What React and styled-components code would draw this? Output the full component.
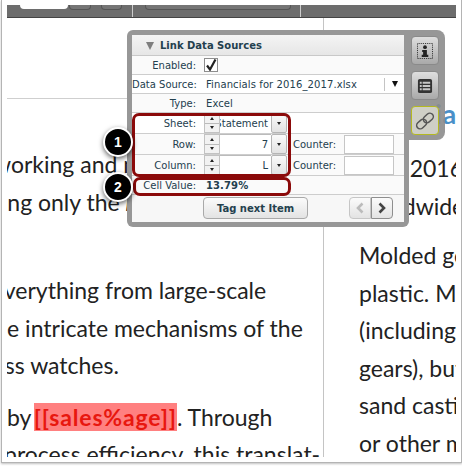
import React from 'react';
import styled, { createGlobalStyle } from 'styled-components';

const panelFont = '"DejaVu Sans", Verdana, sans-serif';
const docFont = 'Lato, "Noto Sans", sans-serif';
const ink = '#23404e';

const GlobalStyle = createGlobalStyle`
  html, body { margin: 0; padding: 0; background: #fff; }
`;

const Page = styled.div`
  position: relative;
  width: 462px;
  height: 466px;
  overflow: hidden;
  background: #fff;
`;

const Sheet = styled.div`
  width: 461px;
  height: 463px;
  margin-left: 1px;
  box-sizing: border-box;
  padding: 5px 5px 5px;
  border: 1px solid #b4b4b4;
  border-top: 0;
  box-shadow: 0 1px 2px rgba(0,0,0,0.25);
  display: flex;
  flex-direction: column;
`;

const TopBar = styled.div`
  height: 12px;
  flex: none;
  display: flex;
  align-items: flex-start;
  background: #6d6d6d;
  border-bottom: 1px solid #444;
  box-sizing: content-box;
`;

const BarTab = styled.div`
  height: ${p => p.$height || 4}px;
  width: ${p => p.$width}px;
  margin-left: ${p => p.$gap}px;
  background: ${p => p.$white ? '#fff' : '#757575'};
  border: ${p => p.$white ? '0' : '1px solid #555'};
  border-top: 0;
  border-radius: 0 0 4px 4px;
`;

const BarDivider = styled.div`
  width: 1px;
  height: 12px;
  margin-left: ${p => p.$gap}px;
  background: #ccc;
`;

const Columns = styled.div`
  flex: 1;
  min-height: 0;
  display: grid;
  grid-template-columns: 317px 1fr;
  overflow: hidden;
  font-family: ${docFont};
  font-size: 23px;
  line-height: 37.5px;
  color: #222;
`;

const LeftColumn = styled.div`
  overflow: hidden;
  border-right: 1px solid #c4c4c4;
`;

const RightColumn = styled.div`
  overflow: hidden;
  padding-left: 35px;
`;

const Rule = styled.div`
  height: 1px;
  margin: 80px 0 47px;
  background: #cfcfcf;
`;

const Heading = styled.div`
  margin: 77px 0 18px;
  font-size: 27px;
  line-height: 37px;
  font-weight: 700;
  letter-spacing: 0.6px;
  color: #4a90c8;
  white-space: nowrap;
`;

const Paragraph = styled.div`
  margin-bottom: ${p => p.$after ?? 14}px;
`;

const Line = styled.div`
  white-space: nowrap;
  margin-left: ${p => p.$shift || 0}px;
`;

const Tag = styled.span`
  margin-left: -3px;
  font-weight: 700;
  letter-spacing: 0.85px;
  color: #e8170f;
  background: #ff8080;
`;

const Panel = styled.div`
  position: absolute;
  left: 127px;
  top: 30px;
  display: flex;
  align-items: flex-start;
  font-family: ${panelFont};
  font-size: 10px;
  color: ${ink};
`;

const PanelMain = styled.div`
  width: 272px;
  border: 5px solid rgba(140,140,140,0.9);
  border-radius: 6px 0 6px 6px;
  background: #fff;
`;

const PanelSide = styled.div`
  width: 36px;
  height: 110px;
  box-sizing: border-box;
  padding: 6px 0 0 2px;
  display: flex;
  flex-direction: column;
  gap: 6px;
  background: rgba(140,140,140,0.9);
  border-radius: 0 8px 8px 0;
`;

const SideButton = styled.div`
  width: 28px;
  height: 29px;
  box-sizing: border-box;
  display: flex;
  align-items: center;
  justify-content: center;
  border-radius: 4px;
  border: 1px solid ${p => p.$active ? '#b4b820' : '#8a8a8a'};
  background: ${p => p.$active ? '#cfcfc6' : 'linear-gradient(#dedede, #a9a9a9)'};
`;

const Header = styled.div`
  height: 21px;
  box-sizing: border-box;
  padding-left: 14px;
  display: flex;
  align-items: center;
  gap: 6px;
  font-size: 10px;
  font-weight: 700;
  background: linear-gradient(#f4f4f4, #e6e6e6);
  border-bottom: 1px solid #c8c8c8;
`;

const HeaderArrow = styled.span`
  width: 0;
  height: 0;
  margin-top: 2px;
  border-left: 4px solid transparent;
  border-right: 4px solid transparent;
  border-top: 8px solid #7e7e7e;
`;

const Row = styled.div`
  height: ${p => p.$height}px;
  box-sizing: border-box;
  display: flex;
  align-items: center;
  background: ${p => p.$bg || '#fafafa'};
  border-bottom: 1px solid #cdcdcd;
`;

const Label = styled.div`
  width: 64px;
  flex: none;
  text-align: right;
  white-space: nowrap;
  margin-right: ${p => p.$gap ?? 10}px;
`;

const Value = styled.div`
  flex: 1;
  white-space: nowrap;
  font-weight: ${p => p.$bold ? 700 : 400};
  letter-spacing: 0.1px;
`;

const CheckBox = styled.div`
  width: 14px;
  height: 14px;
  margin-left: -2px;
  box-sizing: border-box;
  border: 1px solid #8d8d8d;
  background: #fff;
  display: flex;
  align-items: center;
  justify-content: center;
`;

const SourceArrow = styled.div`
  width: 19px;
  height: 13px;
  flex: none;
  display: flex;
  align-items: center;
  justify-content: center;
  border-left: 1px solid #c4c4c4;
  &::after {
    content: '';
    border-left: 3.5px solid transparent;
    border-right: 3.5px solid transparent;
    border-top: 6px solid #111;
  }
`;

const Spinner = styled.div`
  width: 16px;
  height: 20px;
  flex: none;
  display: flex;
  flex-direction: column;
  margin-left: -2px;
  border: 1px solid #c2c2c2;
  box-sizing: border-box;
`;

const SpinHalf = styled.div`
  flex: 1;
  display: flex;
  align-items: center;
  justify-content: center;
  background: #f2f2f2;
  & + & { border-top: 1px solid #bbb; }
  &::after {
    content: '';
    border-left: 2.5px solid transparent;
    border-right: 2.5px solid transparent;
    ${p => p.$down ? 'border-top: 3px solid #222;' : 'border-bottom: 3px solid #222;'}
  }
`;

const Field = styled.div`
  width: 51px;
  height: 20px;
  flex: none;
  box-sizing: border-box;
  padding-right: 3px;
  display: flex;
  align-items: center;
  justify-content: flex-end;
  overflow: hidden;
  white-space: nowrap;
  background: #fff;
  border-top: 1px solid #bbb;
`;

const DropButton = styled.div`
  width: 16px;
  height: 20px;
  flex: none;
  box-sizing: border-box;
  display: flex;
  align-items: center;
  justify-content: center;
  border: 1px solid #b5b5b5;
  border-radius: 2px;
  background: linear-gradient(#fafafa, #e2e2e2);
  &::after {
    content: '';
    border-left: 2.5px solid transparent;
    border-right: 2.5px solid transparent;
    border-top: 3px solid #222;
  }
`;

const CounterLabel = styled.div`
  margin-left: 6px;
  width: 51px;
  flex: none;
  white-space: nowrap;
`;

const CounterInput = styled.div`
  width: 50px;
  height: 19px;
  flex: none;
  box-sizing: border-box;
  background: #fff;
  border: 1px solid #c6c6c6;
`;

const ActionRow = styled.div`
  height: 27px;
  box-sizing: border-box;
  padding-top: 2px;
  display: flex;
  align-items: flex-start;
  background: #f7f7f7;
`;

const TagButton = styled.div`
  width: 105px;
  height: 22px;
  margin-left: 71px;
  box-sizing: border-box;
  display: flex;
  align-items: center;
  justify-content: center;
  font-size: 10px;
  font-weight: 700;
  border: 1px solid #a9a9a9;
  border-radius: 4px;
  background: linear-gradient(#fbfbfb, #e3e3e3);
`;

const NavGroup = styled.div`
  display: flex;
  margin-left: 41px;
  height: 22px;
`;

const NavButton = styled.div`
  width: 22px;
  box-sizing: border-box;
  display: flex;
  align-items: center;
  justify-content: center;
  border: 1px solid ${p => p.$disabled ? '#c6c6c6' : '#8e8e8e'};
  border-radius: ${p => p.$left ? '4px 0 0 4px' : '0 4px 4px 0'};
  background: linear-gradient(#fbfbfb, #e3e3e3);
`;

const Highlight = styled.div`
  position: absolute;
  left: ${p => p.$left}px;
  top: ${p => p.$top}px;
  width: ${p => 291 - p.$left}px;
  height: ${p => p.$height}px;
  box-sizing: border-box;
  border: 3px solid #8b0a0a;
  border-radius: 7px;
`;

const Callout = styled.div`
  position: absolute;
  left: 103px;
  top: ${p => p.$top}px;
  width: 30px;
  height: 30px;
  box-sizing: border-box;
  display: flex;
  align-items: center;
  justify-content: center;
  border-radius: 50%;
  border: 2px solid #fff;
  background: #000;
  color: #fff;
  font-family: "Liberation Sans", Arial, sans-serif;
  font-size: 14px;
  font-weight: 700;
  box-shadow: 0 2px 5px rgba(0,0,0,0.6);
`;

const InfoIcon = () => (
  <svg width="16" height="16" viewBox="0 0 17 17">
    <rect x="0.5" y="0.5" width="16" height="16" fill="none" stroke="#222" strokeDasharray="1 1" />
    <circle cx="8.5" cy="4.5" r="2" fill="#222" />
    <path d="M5.500 7.500h5v5h1.500v2.500H5v-2.500h1.500v-3H5.500z" fill="#222" />
  </svg>
);

const ListIcon = () => (
  <svg width="16" height="16" viewBox="0 0 17 17">
    <rect x="1" y="1" width="15" height="15" rx="2" fill="#333" />
    <path d="M3 4h2v2H3zM6 4h8v2H6zM3 7.500h2v2H3zM6 7.500h8v2H6zM3 11h2v2H3zM6 11h8v2H6z" fill="#c6c6c6" />
  </svg>
);

const LinkIcon = () => (
  <svg width="22" height="22" viewBox="0 0 22 22">
    <g fill="none" stroke="#555" strokeWidth="1.500" transform="rotate(-42 11 11)">
      <rect x="1" y="7.500" width="11" height="7" rx="3.500" />
      <rect x="10" y="7.500" width="11" height="7" rx="3.500" />
    </g>
  </svg>
);

const Check = () => (
  <svg width="12" height="12" viewBox="0 0 12 12">
    <path d="M2 6.500 L5 10.500 L10.500 0.500" fill="none" stroke="#222" strokeWidth="2.200" />
  </svg>
);

const Chevron = ({ left, color }) => (
  <svg width="10" height="12" viewBox="0 0 10 12">
    <path d={left ? 'M7.500 1.500 L3 6 L7.500 10.500' : 'M2.500 1.500 L7 6 L2.500 10.500'} fill="none" stroke={color} strokeWidth="2.600" />
  </svg>
);

const Stepper = () => (
  <Spinner>
    <SpinHalf />
    <SpinHalf $down />
  </Spinner>
);

export default function App() {
  return (
    <Page>
      <GlobalStyle />
      <Sheet>
        <TopBar>
          <BarTab $white $width={48} $gap={13} />
          <BarTab $width={20} $gap={1} />
          <BarTab $width={19} $gap={10} />
          <BarDivider $gap={10} />
          <BarTab $width={144} $gap={12} />
          <BarDivider $gap={9} />
        </TopBar>
        <Columns>
          <LeftColumn>
            <Rule />
            <Paragraph $after={51}>
              <Line $shift={-14}>working and making</Line>
              <Line $shift={-28}>using only the <em>highest</em></Line>
            </Paragraph>
            <Paragraph>
              <Line $shift={-16}>Everything from large-scale</Line>
              <Line $shift={-21}>the intricate mechanisms of the</Line>
              <Line $shift={-31}>glass watches.</Line>
            </Paragraph>
            <Paragraph>
              <Line>by <Tag>[[sales%age]]</Tag>. Through</Line>
              <Line $shift={-3}>process efficiency, this translat-</Line>
            </Paragraph>
          </LeftColumn>
          <RightColumn>
            <Heading>Materia</Heading>
            <Paragraph $after={12}>
              <Line $shift={-23}>Part of 2016</Line>
              <Line $shift={-1}>worldwide</Line>
            </Paragraph>
            <Paragraph>
              <Line>Molded gears</Line>
              <Line>plastic. Metal</Line>
              <Line>(including</Line>
              <Line>gears), but</Line>
              <Line>sand casting</Line>
              <Line>or other metal</Line>
            </Paragraph>
          </RightColumn>
        </Columns>
      </Sheet>

      <Panel>
        <PanelMain>
          <Header>
            <HeaderArrow />
            Link Data Sources
          </Header>
          <Row $height={19}>
            <Label>Enabled:</Label>
            <CheckBox><Check /></CheckBox>
          </Row>
          <Row $height={19} $bg="#fff">
            <Label>Data Source:</Label>
            <Value>Financials for 2016_2017.xlsx</Value>
            <SourceArrow />
          </Row>
          <Row $height={19}>
            <Label>Type:</Label>
            <Value>Excel</Value>
          </Row>
          <Row $height={21} $bg="#fff">
            <Label>Sheet:</Label>
            <Stepper />
            <Field>Income Statement</Field>
            <DropButton />
          </Row>
          <Row $height={21}>
            <Label>Row:</Label>
            <Stepper />
            <Field>7</Field>
            <DropButton />
            <CounterLabel>Counter:</CounterLabel>
            <CounterInput />
          </Row>
          <Row $height={21}>
            <Label>Column:</Label>
            <Stepper />
            <Field>L</Field>
            <DropButton />
            <CounterLabel>Counter:</CounterLabel>
            <CounterInput />
          </Row>
          <Row $height={19}>
            <Label>Cell Value:</Label>
            <Value $bold>13.79%</Value>
          </Row>
          <ActionRow>
            <TagButton>Tag next Item</TagButton>
            <NavGroup>
              <NavButton $left $disabled><Chevron left color="#bbb" /></NavButton>
              <NavButton><Chevron color="#444" /></NavButton>
            </NavGroup>
          </ActionRow>
        </PanelMain>
        <PanelSide>
          <SideButton><InfoIcon /></SideButton>
          <SideButton><ListIcon /></SideButton>
          <SideButton $active><LinkIcon /></SideButton>
        </PanelSide>
      </Panel>

      <Highlight $left={132} $top={113} $height={64} />
      <Highlight $left={133} $top={177} $height={19} />
      <Callout $top={127}>1</Callout>
      <Callout $top={172}>2</Callout>
    </Page>
  );
}
